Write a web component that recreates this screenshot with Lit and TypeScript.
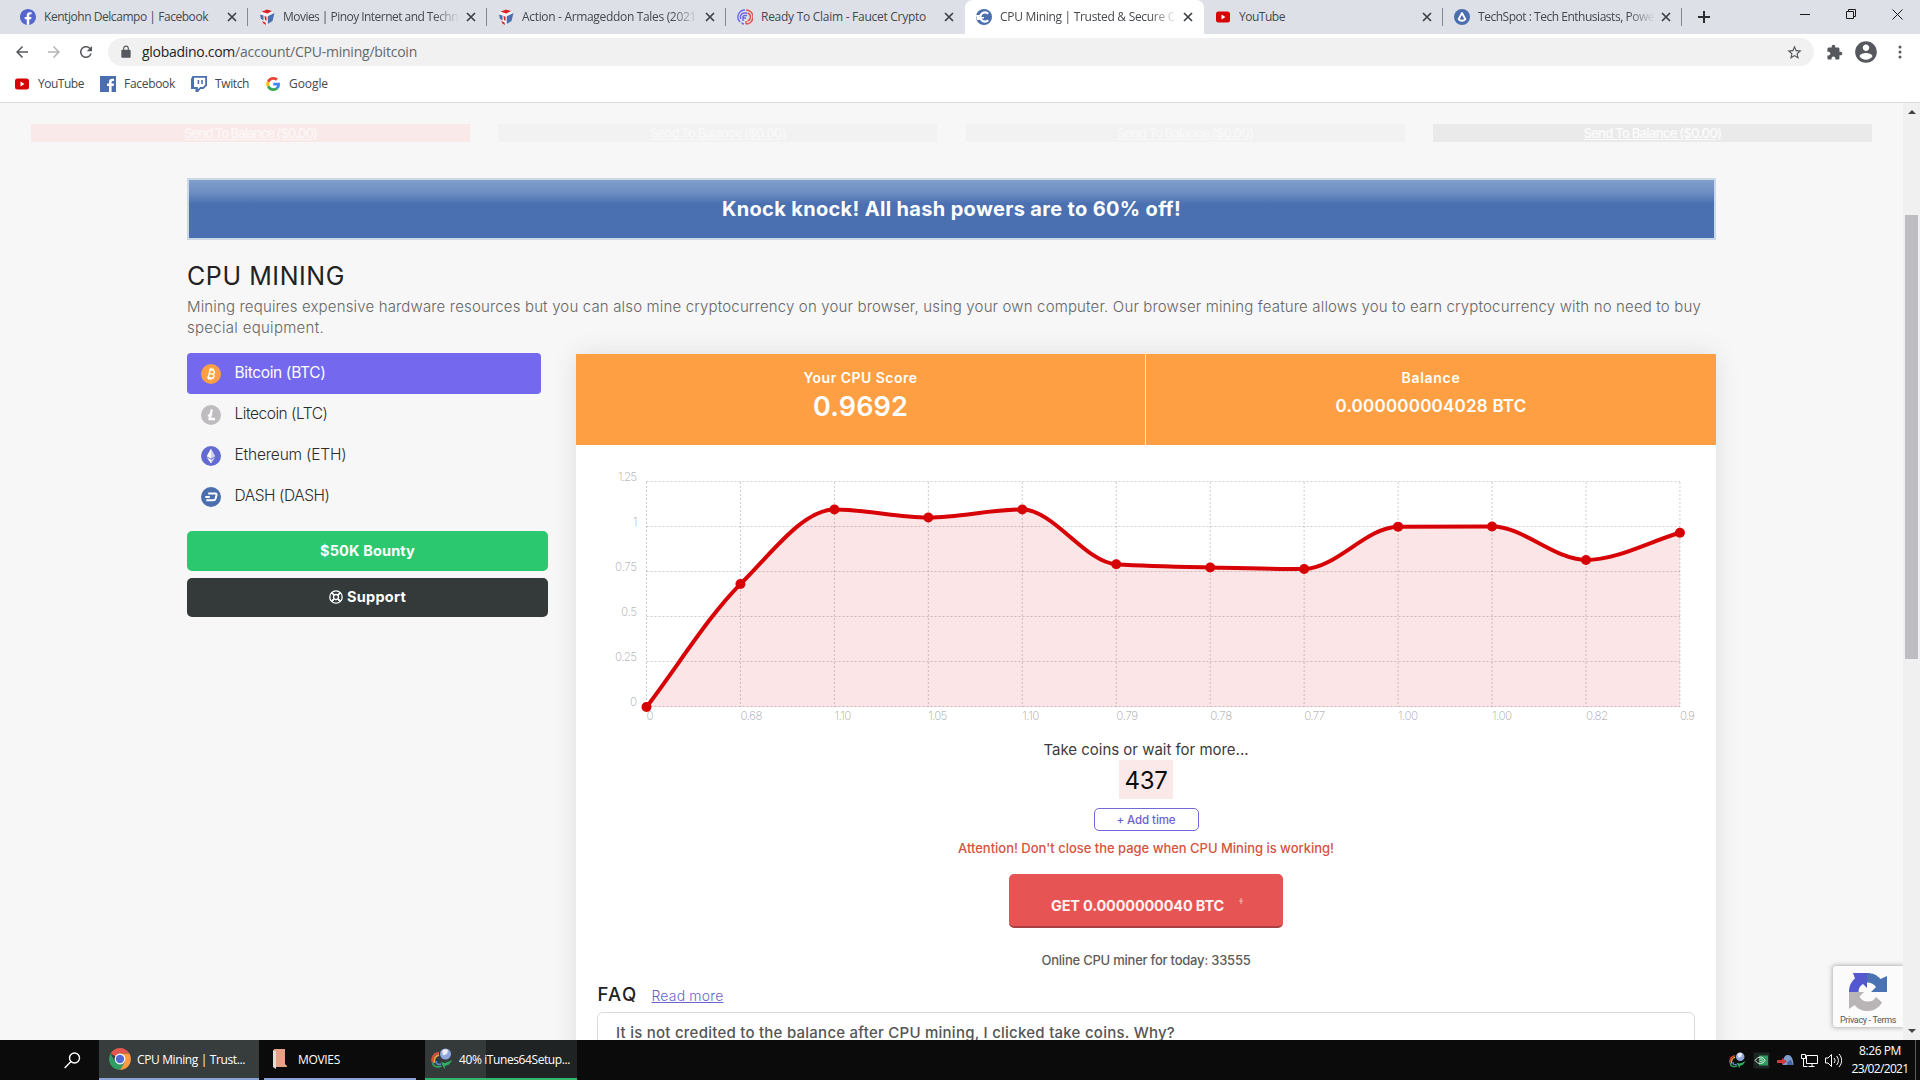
import { html, svg, css, LitElement } from "lit";
import { customElement, property, query } from "lit/decorators.js";
import { classMap } from "lit/directives/class-map.js";

// One line of text, tracked so that it fills the given width.
@customElement("fit-text")
export class FitText extends LitElement {
    static styles = css`
    :host {
        display: block;
        white-space: nowrap;
    }
    `;

    @property({ type: Number }) w = 0;
    @query("span") line!: HTMLSpanElement;

    firstUpdated() {
        const chars = (this.textContent || "").trim().length;
        const natural = this.line.getBoundingClientRect().width;
        if (this.w && chars) {
            this.line.style.letterSpacing = `${(this.w - natural) / chars}px`;
        }
    }

    render() {
        return html`<span><slot></slot></span>`;
    }
}

const fit = (text: string, w: number, cls = "") =>
    html`<fit-text class=${cls} w=${w}>${text}</fit-text>`;

const material = (d: string, size: number) =>
    html`<svg width=${size} height=${size} viewBox="0 0 24 24"><path fill="currentColor" d=${d} /></svg>`;

const paths = {
    back: "M20 11H7.83l5.59-5.59L12 4l-8 8 8 8 1.41-1.41L7.83 13H20v-2z",
    forward: "M12 4l-1.41 1.41L16.17 11H4v2h12.17l-5.58 5.59L12 20l8-8z",
    reload: "M17.65 6.35C16.2 4.9 14.21 4 12 4c-4.42 0-7.99 3.58-7.99 8s3.57 8 7.99 8c3.73 0 6.84-2.55 7.73-6h-2.08c-.82 2.33-3.04 4-5.65 4-3.31 0-6-2.69-6-6s2.69-6 6-6c1.66 0 3.14.69 4.22 1.78L13 11h7V4l-2.35 2.35z",
    lock: "M18 8h-1V6c0-2.76-2.24-5-5-5S7 3.24 7 6v2H6c-1.1 0-2 .9-2 2v10c0 1.1.9 2 2 2h12c1.1 0 2-.9 2-2V10c0-1.1-.9-2-2-2zM8.9 8V6c0-1.71 1.39-3.1 3.1-3.1 1.71 0 3.1 1.39 3.1 3.1v2z",
    star: "M22 9.24l-7.19-.62L12 2 9.19 8.63 2 9.24l5.46 4.73L5.82 21 12 17.27 18.18 21l-1.63-7.03L22 9.24zM12 15.4l-3.76 2.27 1-4.28-3.32-2.88 4.38-.38L12 6.1l1.71 4.04 4.38.38-3.32 2.88 1 4.28L12 15.4z",
    puzzle: "M20.5 11H19V7c0-1.1-.9-2-2-2h-4V3.5C13 2.12 11.88 1 10.5 1S8 2.12 8 3.5V5H4c-1.1 0-1.99.9-1.99 2v3.8H3.5c1.49 0 2.7 1.21 2.7 2.7s-1.21 2.7-2.7 2.7H2V20c0 1.1.9 2 2 2h3.8v-1.5c0-1.49 1.21-2.7 2.7-2.7 1.49 0 2.7 1.21 2.7 2.7V22H17c1.1 0 2-.9 2-2v-4h1.5c1.38 0 2.5-1.12 2.5-2.5S21.88 11 20.5 11z",
    person: "M12 2C6.48 2 2 6.48 2 12s4.48 10 10 10 10-4.48 10-10S17.52 2 12 2zm0 3c1.66 0 3 1.34 3 3s-1.34 3-3 3-3-1.34-3-3 1.34-3 3-3zm0 14.2c-2.5 0-4.71-1.28-6-3.22.03-1.99 4-3.08 6-3.08 1.99 0 5.97 1.09 6 3.08-1.29 1.94-3.5 3.22-6 3.22z",
    facebook: "M24 12.07c0-6.63-5.37-12-12-12s-12 5.37-12 12c0 5.99 4.39 10.95 10.13 11.85v-8.38H7.08v-3.47h3.05V9.43c0-3.01 1.79-4.67 4.53-4.67 1.31 0 2.69.24 2.69.24v2.95h-1.52c-1.49 0-1.96.93-1.96 1.87v2.25h3.33l-.53 3.47h-2.8v8.38C19.61 23.03 24 18.06 24 12.07z",
};

const favicons: Record<string, unknown> = {
    facebook: html`<svg width="16" height="16" viewBox="0 0 24 24"><circle cx="12" cy="12" r="11" fill="#fff" /><path fill="#5566cc" d=${paths.facebook} /></svg>`,
    cube: html`<svg width="16" height="16" viewBox="0 0 16 16">
        <path fill="#f3f1f4" d="M1 4l7-4 7 4-1.500 8L8 16l-5.500-4z" />
        <path fill="#4a6eae" d="M8.800 7.200L15.500 4 13.500 12 8.800 15z" />
        <path fill="#4a6eae" d="M1 5.500l3.500 1v5L2 10z" />
        <path fill="#d8222a" d="M2.500 2.800L8 .5l5 1.500-4.500 2.500zM3 12l3.500 1.500L7 16l-2.500-1.500zM5.500 7l2 .8v4l-1.500-.8z" />
    </svg>`,
    faucet: html`<svg width="16" height="16" viewBox="0 0 16 16" fill="none" stroke-width="1.4">
        <path stroke="#6a66e8" d="M8 1a7 7 0 0 0-5 12M10 4H7a4 4 0 0 0-3 6M10 6.500H8a2 2 0 0 0-2 2V12M5 13.500c0 1 1 1.500 2 1.500M6 9h3" />
        <path stroke="#e0524e" d="M9 1a7 7 0 0 1 0 14M10.500 4a4.200 4.200 0 0 1 0 8M9 12v3" />
    </svg>`,
    globadino: html`<svg width="16" height="16" viewBox="0 0 16 16">
        <circle cx="8" cy="8" r="8" fill="#4a6eae" />
        <path fill="none" stroke="#fff" stroke-width="2.200" d="M12.200 4.800A4.600 4.600 0 1 0 12.200 11.200" />
        <path fill="#fff" d="M0 6h5v1H3v1h5v1.500H4V11H1z" />
    </svg>`,
    youtube: html`<svg width="16" height="16" viewBox="0 0 16 16"><rect x="1" y="2.500" width="14" height="11" rx="2.500" fill="#d70206" /><path fill="#fff" d="M6.500 5.500v5L10.500 8z" /></svg>`,
    techspot: html`<svg width="16" height="16" viewBox="0 0 16 16">
        <circle cx="8" cy="8" r="8" fill="#4a6eae" />
        <path fill="none" stroke="#fff" stroke-width="1.800" stroke-linejoin="round" d="M8 4l3.400 6.200a4.500 4.500 0 0 1-6.800 0z" />
    </svg>`,
    fbSquare: html`<svg width="16" height="16" viewBox="0 0 16 16">
        <rect width="16" height="16" fill="#4a6eae" />
        <path fill="#fff" d="M9 16v-6H7V7.600h2V6c0-2 1.200-3.200 3.200-3.200H14V5h-1.200c-.9 0-1.200.4-1.200 1.200v1.400H14l-.4 2.400h-2v6z" />
    </svg>`,
    twitch: html`<svg width="16" height="16" viewBox="0 0 16 16">
        <path fill="#4a6eae" d="M1.500 0H16v9.500L12.500 13H9.500L7 16H4.500v-3H0V3z" />
        <path fill="#fff" d="M3 1.800h11.200V8.700L12 11H9.200l-2.400 2.200V11H3z" />
        <path fill="#4a6eae" d="M6.600 4h1.600v4H6.600zM10.200 4h1.600v4h-1.600z" />
    </svg>`,
    google: html`<svg width="16" height="16" viewBox="-4.500 -3.500 55 55">
        <path fill="#EA4335" d="M24 9.500c3.540 0 6.710 1.220 9.210 3.600l6.850-6.850C35.900 2.380 30.470 0 24 0 14.620 0 6.510 5.380 2.560 13.220l7.980 6.190C12.430 13.720 17.740 9.500 24 9.500z" />
        <path fill="#4285F4" d="M46.980 24.550c0-1.570-.15-3.090-.38-4.550H24v9.020h12.940c-.58 2.960-2.260 5.480-4.780 7.180l7.730 6c4.510-4.180 7.090-10.360 7.090-17.650z" />
        <path fill="#FBBC05" d="M10.530 28.590c-.48-1.450-.76-2.990-.76-4.590s.27-3.140.76-4.590l-7.980-6.190C.92 16.460 0 20.120 0 24c0 3.880.92 7.540 2.560 10.780l7.970-6.190z" />
        <path fill="#34A853" d="M24 48c6.480 0 11.930-2.130 15.890-5.810l-7.730-6c-2.150 1.450-4.920 2.300-8.160 2.300-6.260 0-11.570-4.220-13.470-9.910l-7.980 6.190C6.510 42.620 14.620 48 24 48z" />
    </svg>`,
};

const coinIcons: Record<string, unknown> = {
    btc: html`<svg width="20" height="20" viewBox="0 0 20 20">
        <circle cx="10" cy="10" r="10" fill="#ff9f43" />
        <g transform="rotate(13 10 10)" fill="none" stroke="#fff" stroke-width="1.400">
            <path d="M7 6h4a1.900 1.900 0 0 1 0 3.800H8h3.400a2.100 2.100 0 0 1 0 4.200H7M8.200 6v8M8.800 4v2M11 4v2M8.800 14v2M11 14v2" />
        </g>
    </svg>`,
    ltc: html`<svg width="20" height="20" viewBox="0 0 20 20">
        <circle cx="10" cy="10" r="10" fill="#bfbcc0" />
        <path fill="none" stroke="#fff" stroke-width="2.400" d="M10.800 4.500L8.600 14H14M7 11l4-1.700" />
    </svg>`,
    eth: html`<svg width="20" height="20" viewBox="0 0 20 20">
        <circle cx="10" cy="10" r="10" fill="#636bd2" />
        <path fill="#fff" d="M10 2.500l4.300 7.700L10 12.700z" opacity=".7" />
        <path fill="#fff" d="M10 2.500L5.700 10.200 10 12.700zM5.700 11.300L10 17.500v-3.700z" />
        <path fill="#fff" d="M14.300 11.300L10 17.500v-3.700z" opacity=".7" />
    </svg>`,
    dash: html`<svg width="20" height="20" viewBox="0 0 20 20">
        <circle cx="10" cy="10" r="10" fill="#4a6eae" />
        <path fill="none" stroke="#fff" stroke-width="2" stroke-linejoin="round" d="M7.200 6.500h7.300c1 0 1.300.6 1 1.500l-1 3.800c-.3.900-1 1.500-2 1.500H5.300M4.300 10h4.500" />
    </svg>`,
};

const chrome = html`<svg width="22" height="22" viewBox="0 0 22 22">
    <path fill="#e25650" d="M11 11L1.500 5.500A11 11 0 0 1 20.500 5.500L11 5.500z" />
    <path fill="#2f9e63" d="M11 11L6.200 13.700 1.500 5.500A11 11 0 0 0 11 22l4.800-8.200z" />
    <path fill="#fd9a42" d="M11 5.500h9.500A11 11 0 0 1 11 22l4.800-8.200z" />
    <circle cx="11" cy="11" r="5.400" fill="#fff" />
    <circle cx="11" cy="11" r="4.200" fill="#5468d4" />
</svg>`;

const idm = (size: number) => html`<svg width=${size} height=${size} viewBox="0 0 22 22">
    <circle cx="14.500" cy="6" r="5.500" fill="#8fa6dc" />
    <path fill="#eceaf2" d="M11 3c1.500-2 4-2.500 6-1l-1 4-4 1.500z" />
    <g fill="none" stroke-width="1.800">
        <path stroke="#d9503f" d="M8 5C3 5 .8 9 1.200 14" />
        <path stroke="#e9a23c" d="M8 7C4.500 7.500 2.800 10.500 3.200 15" />
        <path stroke="#35a562" d="M1.500 14.500c.5 4 5 5.500 9 3.500" />
        <path stroke="#5b86d8" d="M5 13c0 3 2 4 5 3" />
    </g>
    <path fill="#2fae62" d="M10 14l4 1 7.500-3-3.500 4.500-4 1.500-.5 3-2-3.500z" />
</svg>`;

interface Tab { icon: string; title: string; w: number; active?: boolean; faded?: boolean }

const tabs: Tab[] = [
    { icon: "facebook", title: "Kentjohn Delcampo | Facebook", w: 164 },
    { icon: "cube", title: "Movies | Pinoy Internet and Techn", w: 175, faded: true },
    { icon: "cube", title: "Action - Armageddon Tales (2021", w: 174, faded: true },
    { icon: "faucet", title: "Ready To Claim - Faucet Crypto", w: 165 },
    { icon: "globadino", title: "CPU Mining | Trusted & Secure C", w: 175, active: true, faded: true },
    { icon: "youtube", title: "YouTube", w: 46 },
    { icon: "techspot", title: "TechSpot : Tech Enthusiasts, Powe", w: 176, faded: true },
];

const coins = [
    { id: "btc", name: "Bitcoin (BTC)", w: 91 },
    { id: "ltc", name: "Litecoin (LTC)", w: 93 },
    { id: "eth", name: "Ethereum (ETH)", w: 112 },
    { id: "dash", name: "DASH (DASH)", w: 95 },
];

@customElement("score-chart")
export class ScoreChart extends LitElement {
    static styles = css`
    :host {
        display: block;
        height: 284px;
    }

    svg {
        display: block;
    }

    .grid {
        stroke: rgba(0, 0, 0, 0.2);
        stroke-width: 1;
        stroke-dasharray: 2px;
    }

    .line {
        fill: none;
        stroke: #d70206;
        stroke-width: 4;
    }

    .area {
        fill: #d70206;
        fill-opacity: 0.1;
    }

    .point {
        fill: #d70206;
    }

    text {
        fill: rgba(0, 0, 0, 0.3);
        font: 300 11.5px Inter, sans-serif;
    }
    `;

    values = [0, 0.683, 1.097, 1.053, 1.097, 0.793, 0.775, 0.767, 1.002, 1.003, 0.817, 0.968];
    labels: [string, number][] = [
        ["0", 7], ["0.68", 22], ["1.10", 17], ["1.05", 19], ["1.10", 17], ["0.79", 22],
        ["0.78", 22], ["0.77", 21], ["1.00", 20], ["1.00", 20], ["0.82", 22], ["0.9", 15],
    ];
    ticks: [string, number][] = [["0", 7], ["0.25", 22], ["0.5", 16], ["0.75", 22], ["1", 4], ["1.25", 19]];

    left = 70.5;
    bottom = 262;
    step = 93.95;

    // Monotone cubic interpolation through all points
    curve() {
        const xs = this.values.map((_, i) => this.left + i * this.step);
        const ys = this.values.map((v) => this.bottom - v * 180);
        const n = xs.length;
        const ds: number[] = [];
        for (let i = 0; i < n - 1; i++) {
            ds.push((ys[i + 1] - ys[i]) / this.step);
        }
        const ms = [ds[0]];
        for (let i = 1; i < n - 1; i++) {
            ms.push(ds[i] * ds[i - 1] <= 0 ? 0 : 2 / (1 / ds[i - 1] + 1 / ds[i]));
        }
        ms.push(ds[n - 2]);
        let d = `M${xs[0]},${ys[0]}`;
        for (let i = 0; i < n - 1; i++) {
            const k = this.step / 3;
            d += `C${xs[i] + k},${ys[i] + ms[i] * k},${xs[i + 1] - k},${ys[i + 1] - ms[i + 1] * k},${xs[i + 1]},${ys[i + 1]}`;
        }
        return d;
    }

    render() {
        const { left, bottom, step } = this;
        const right = left + step * 11;
        const d = this.curve();
        return html`
            <svg width="1140" height="284">
                ${this.values.map((_, i) => svg`<line class="grid" x1=${left + i * step} x2=${left + i * step} y1=${bottom - 225} y2=${bottom} />`)}
                ${this.ticks.map((_, i) => svg`<line class="grid" x1=${left} x2=${right} y1=${bottom - i * 45 - 0.5} y2=${bottom - i * 45 - 0.5} />`)}
                <path class="area" d="${d}V${bottom}H${left}Z" />
                <path class="line" d=${d} />
                ${this.values.map((v, i) => svg`<circle class="point" cx=${left + i * step} cy=${bottom - v * 180} r="5" />`)}
                ${this.ticks.map(([t, w], i) => svg`<text x=${61 - w} y=${bottom - i * 45 - 1.5} textLength=${w}>${t}</text>`)}
                ${this.labels.map(([t, w], i) => svg`<text x=${left + i * step} y=${bottom + 13} textLength=${w}>${t}</text>`)}
            </svg>
        `;
    }
}

@customElement("browser-bar")
export class BrowserBar extends LitElement {
    static styles = css`
    :host {
        display: block;
        height: 103px;
        box-sizing: border-box;
        border-bottom: 1px solid #dcdcde;
        background: #fff;
        font: 12px/16px "Open Sans", sans-serif;
        color: #45484c;
    }

    svg {
        display: block;
        flex: none;
    }

    .tabs {
        display: flex;
        height: 34px;
        padding-left: 9px;
        background: #dde1e7;
    }

    .tab {
        display: flex;
        align-items: center;
        box-sizing: border-box;
        width: 239px;
        padding: 0 11px;
        position: relative;
    }

    .tab::after {
        content: "";
        position: absolute;
        right: 0;
        top: 8px;
        height: 18px;
        width: 1px;
        background: #85888d;
    }

    .tab.active {
        background: #fff;
        border-radius: 8px 8px 0 0;
    }

    .tab.active::after,
    .tab.before::after {
        display: none;
    }

    .title {
        flex: 1;
        overflow: hidden;
        margin: 0 4px 0 8px;
    }

    .faded .title {
        -webkit-mask-image: linear-gradient(90deg, #000 150px, transparent 177px);
    }

    .plus {
        width: 43px;
        display: grid;
        place-items: center;
    }

    .window {
        display: flex;
        margin-left: auto;
        height: 28px;
        color: #1b1b1b;
    }

    .window div {
        width: 46px;
        display: grid;
        place-items: center;
    }

    .toolbar {
        display: flex;
        align-items: center;
        height: 36px;
        padding: 0 9px 0 13px;
        color: #55585c;
    }

    .nav {
        display: flex;
        gap: 14px;
    }

    .muted {
        color: #b4b5b7;
    }

    .address {
        flex: 1;
        display: flex;
        align-items: center;
        height: 28px;
        box-sizing: border-box;
        margin: 0 12px 0 13px;
        padding: 0 11px;
        border-radius: 14px;
        background: #f1f1f1;
        font-size: 14px;
    }

    .lock {
        margin-right: 9px;
    }

    .host {
        color: #222326;
    }

    .path {
        flex: 1;
        color: #66686c;
    }

    .actions {
        display: flex;
        align-items: center;
        gap: 10px;
    }

    .bookmarks {
        display: flex;
        align-items: center;
        height: 28px;
        padding-left: 14px;
    }

    .bookmark {
        display: flex;
        align-items: center;
        gap: 8px;
        margin-right: 16px;
    }
    `;

    render() {
        const cross = html`<svg width="10" height="10" viewBox="0 0 10 10"><path d="M1 1l8 8M9 1L1 9" stroke="#3c4043" stroke-width="1.700" /></svg>`;
        return html`
            <div class="tabs">
                ${tabs.map((t, i) => html`
                    <div class="tab ${classMap({ active: !!t.active, faded: !!t.faded, before: !!tabs[i + 1]?.active })}">
                        ${favicons[t.icon]}
                        <div class="title">${fit(t.title, t.w)}</div>
                        ${cross}
                    </div>
                `)}
                <div class="plus"><svg width="12" height="12" viewBox="0 0 12 12"><path d="M6 0v12M0 6h12" stroke="#2c2e31" stroke-width="2" /></svg></div>
                <div class="window">
                    <div><svg width="10" height="10"><path d="M0 5.500h10" stroke="currentColor" /></svg></div>
                    <div><svg width="10" height="10" fill="none" stroke="currentColor"><path d="M.5 2.500h7v7h-7zM2.500 2.500v-2h7v7h-2" /></svg></div>
                    <div><svg width="11" height="11"><path d="M.5.5l10 10M10.500.5l-10 10" stroke="currentColor" /></svg></div>
                </div>
            </div>
            <div class="toolbar">
                <div class="nav">
                    ${material(paths.back, 18)}
                    <span class="muted">${material(paths.forward, 18)}</span>
                    ${material(paths.reload, 18)}
                </div>
                <div class="address">
                    <span class="lock">${material(paths.lock, 14)}</span>
                    ${fit("globadino.com", 93, "host")}
                    ${fit("/account/CPU-mining/bitcoin", 182, "path")}
                    ${material(paths.star, 17)}
                </div>
                <div class="actions">
                    ${material(paths.puzzle, 17)}
                    ${material(paths.person, 26)}
                    <svg width="22" height="16"><circle cx="11" cy="3" r="1.500" fill="#55585c" /><circle cx="11" cy="8" r="1.500" fill="#55585c" /><circle cx="11" cy="13" r="1.500" fill="#55585c" /></svg>
                </div>
            </div>
            <div class="bookmarks">
                <div class="bookmark">${favicons.youtube}${fit("YouTube", 46)}</div>
                <div class="bookmark">${favicons.fbSquare}${fit("Facebook", 51)}</div>
                <div class="bookmark">${favicons.twitch}${fit("Twitch", 34)}</div>
                <div class="bookmark">${favicons.google}${fit("Google", 39)}</div>
            </div>
        `;
    }
}

@customElement("mining-page")
export class MiningPage extends LitElement {
    static styles = css`
    :host {
        display: block;
        overflow: hidden;
        position: relative;
        background: #f7f7f7;
        font: 15px/20px Inter, sans-serif;
        color: #333;
    }

    svg {
        display: block;
    }

    .ghosts {
        display: grid;
        grid-template-columns: repeat(4, 439px);
        column-gap: 28.300px;
        padding: 21px 0 0 31px;
        height: 54px;
        box-sizing: border-box;
    }

    .ghost {
        display: grid;
        place-items: center;
        height: 18px;
        background: #f2f2f2;
        color: #f8f8f8;
        font: 600 13px/18px Inter, sans-serif;
        text-decoration: underline;
    }

    .ghost.red {
        background: #fae9e9;
        color: #fcf6f6;
    }

    .ghost.dark {
        background: #eaeaea;
        color: #fafafa;
    }

    .wrap {
        width: 1529px;
        margin: 21px 0 0 187px;
    }

    .banner {
        display: grid;
        place-items: center;
        height: 62px;
        box-sizing: border-box;
        border: 2px solid #cdd8e6;
        background: linear-gradient(#809fcb 0, #6f8fc3 12px, #4a70b1 24px);
        color: #fff;
        font-size: 20px;
        font-weight: 700;
    }

    .heading {
        margin-top: 20px;
        font-size: 25px;
        line-height: 32px;
        color: #222;
    }

    .lead {
        margin-top: 4px;
        font-weight: 300;
        font-size: 15px;
        line-height: 21px;
        color: #666;
    }

    .columns {
        display: flex;
        align-items: flex-start;
        margin-top: 15px;
    }

    .side {
        width: 361px;
        margin-right: 28px;
    }

    .coin {
        display: flex;
        align-items: center;
        gap: 13.500px;
        height: 41px;
        width: 354px;
        box-sizing: border-box;
        padding-left: 14px;
        border-radius: 4px;
        color: #2c2c2c;
        font-size: 15.500px;
        font-weight: 300;
    }

    .coin svg {
        margin-top: 1px;
    }

    .coin fit-text {
        margin-top: -1px;
    }

    .coin.active {
        background: #7368ee;
        color: #fff;
        font-weight: 400;
    }

    .btn {
        display: flex;
        align-items: center;
        justify-content: center;
        gap: 4px;
        height: 40px;
        border-radius: 5px;
        color: #fff;
        font-weight: 700;
        font-size: 14.500px;
    }

    .green {
        margin-top: 14px;
        background: #2bc870;
    }

    .black {
        margin-top: 7px;
        height: 39px;
        box-sizing: border-box;
        padding-bottom: 2px;
        background: #343a3a;
    }

    .card {
        width: 1140px;
        height: 740px;
        margin-top: 1px;
        background: #fff;
        box-shadow: 0 0 24px rgba(0, 0, 0, 0.1);
    }

    .stats {
        display: grid;
        grid-template-columns: 569px 571px;
        height: 91px;
        background: #ff9f43;
        color: #fff;
        font-weight: 600;
    }

    .stat {
        display: flex;
        flex-direction: column;
        align-items: center;
        padding-top: 14px;
        font-size: 14px;
    }

    .stat + .stat {
        border-left: 1px solid #ffe3c6;
    }

    .score,
    .balance {
        line-height: 37px;
    }

    .score {
        font-size: 27px;
    }

    .balance {
        font-size: 17px;
    }

    .claim {
        display: flex;
        flex-direction: column;
        align-items: center;
    }

    .wait {
        margin-top: 11px;
        color: #3c3c3c;
    }

    .timer {
        display: grid;
        place-items: center;
        width: 54px;
        height: 39px;
        background: #fbe9ea;
        color: #0c0c0c;
        font-size: 24px;
        line-height: 41px;
    }

    .add {
        display: grid;
        place-items: center;
        width: 105px;
        height: 23px;
        box-sizing: border-box;
        margin-top: 9px;
        border: 1px solid #7368d8;
        border-radius: 5px;
        color: #6a62cf;
        font-weight: 500;
        font-size: 11.500px;
        line-height: 18px;
    }

    .warn {
        margin-top: 7px;
        color: #d5533f;
        font-weight: 500;
        font-size: 13px;
    }

    .get {
        position: relative;
        display: grid;
        place-items: center;
        width: 274px;
        height: 54px;
        box-sizing: border-box;
        margin-top: 16px;
        padding: 12px 17px 0 0;
        border-radius: 5px;
        border-bottom: 2px solid #a84142;
        background: #e75454;
        color: #fff2f0;
        font-weight: 700;
        font-size: 14.500px;
    }

    .spark {
        position: absolute;
        left: 229px;
        top: 24px;
    }

    .online {
        margin-top: 22px;
        color: #5c5c5c;
        font-weight: 500;
        font-size: 13px;
    }

    .faq {
        display: flex;
        align-items: baseline;
        gap: 14px;
        margin: 11.500px 0 0 21.500px;
        font-size: 18.500px;
        font-weight: 500;
        line-height: 24px;
        color: #222;
    }

    .more {
        color: #6a62cf;
        font-size: 14px;
        font-weight: 300;
        text-decoration: underline;
    }

    .question {
        width: 1098px;
        height: 60px;
        box-sizing: border-box;
        margin: 4.500px 0 0 21px;
        padding: 10px 18px;
        border: 1px solid #d8dadb;
        border-radius: 6px;
        color: #555;
        font-weight: 500;
    }

    .captcha {
        position: absolute;
        right: 0;
        bottom: 13px;
        width: 70px;
        height: 61px;
        box-sizing: border-box;
        padding: 7px 0 0 7px;
        border-radius: 3px 0 0 3px;
        background: #fbfbfb;
        box-shadow: 0 0 4px 1px rgba(120, 110, 110, 0.5);
        color: #555;
        font: 9px/14px Roboto, sans-serif;
    }

    .captcha svg {
        margin: 0 0 2px 9px;
    }
    `;

    render() {
        const ghost = "Send To Balance ($0.00)";
        return html`
            <div class="ghosts">
                <div class="ghost red">${fit(ghost, 133)}</div>
                <div class="ghost">${fit(ghost, 136)}</div>
                <div class="ghost">${fit(ghost, 136)}</div>
                <div class="ghost dark">${fit(ghost, 138)}</div>
            </div>
            <div class="wrap">
                <div class="banner">${fit("Knock knock! All hash powers are to 60% off!", 459)}</div>
                ${fit("CPU MINING", 158, "heading")}
                <div class="lead">
                    ${fit("Mining requires expensive hardware resources but you can also mine cryptocurrency on your browser, using your own computer. Our browser mining feature allows you to earn cryptocurrency with no need to buy", 1514)}
                    ${fit("special equipment.", 137)}
                </div>
                <div class="columns">
                    <div class="side">
                        ${coins.map((c, i) => html`
                            <div class="coin ${classMap({ active: i === 0 })}">${coinIcons[c.id]}${fit(c.name, c.w)}</div>
                        `)}
                        <div class="btn green">${fit("$50K Bounty", 95)}</div>
                        <div class="btn black">
                            <svg width="14" height="14" viewBox="0 0 14 14" fill="none" stroke="#fff" stroke-width="1.300">
                                <circle cx="7" cy="7" r="6.200" /><circle cx="7" cy="7" r="2.500" />
                                <path d="M2.600 2.600l2.600 2.600M11.400 2.600L8.800 5.200M2.600 11.400l2.600-2.600M11.400 11.400L8.800 8.800" stroke-width="1.800" />
                            </svg>
                            ${fit("Support", 59)}
                        </div>
                    </div>
                    <div class="card">
                        <div class="stats">
                            <div class="stat">${fit("Your CPU Score", 114)}${fit("0.9692", 95, "score")}</div>
                            <div class="stat">${fit("Balance", 59)}${fit("0.000000004028 BTC", 191, "balance")}</div>
                        </div>
                        <score-chart></score-chart>
                        <div class="claim">
                            ${fit("Take coins or wait for more...", 205, "wait")}
                            <div class="timer">${fit("437", 43)}</div>
                            <div class="add">${fit("+ Add time", 59)}</div>
                            ${fit("Attention! Don't close the page when CPU Mining is working!", 376, "warn")}
                            <div class="get">
                                ${fit("GET 0.0000000040 BTC", 173)}
                                <svg class="spark" width="6" height="6"><path d="M3 0v6M1 3h4" stroke="#f8b9b4" /></svg>
                            </div>
                            ${fit("Online CPU miner for today: 33555", 209, "online")}
                        </div>
                        <div class="faq">${fit("FAQ", 40)}${fit("Read more", 72, "more")}</div>
                        <div class="question">${fit("It is not credited to the balance after CPU mining, I clicked take coins. Why?", 559)}</div>
                    </div>
                </div>
            </div>
            <div class="captcha">
                <svg width="38" height="38" viewBox="0 0 38 38">
                    <path fill="#4a72b2" d="M18 0c6 0 10 2 13.500 6L38 3v16H22l5-5c-2-3-5-4.500-9-4.500z" />
                    <path fill="#5358cf" d="M0 19C0 13 2 9 6 5.500L4 0h14v15l-4-4c-3 2-4.500 4-4.500 8z" />
                    <path fill="#b9b4b6" d="M0 19h15l-4.500 4.500c2 4 5 5 8.500 5 4 0 6-1.500 8-4.500l6 5.500C29.500 35 25 38 19 38c-6 0-10-2-13.500-6L0 36z" />
                </svg>
                ${fit("Privacy - Terms", 56)}
            </div>
        `;
    }
}

@customElement("task-bar")
export class TaskBar extends LitElement {
    static styles = css`
    :host {
        display: flex;
        height: 40px;
        background: #0b0b0b;
        color: #fff;
        font: 12px/18px "Open Sans", sans-serif;
    }

    svg {
        display: block;
        flex: none;
    }

    .search {
        width: 35px;
        padding: 12px 0 0 64px;
    }

    .task {
        display: flex;
        align-items: center;
        box-sizing: border-box;
        height: 40px;
        border-bottom: 2px solid #8aa3d6;
    }

    .task fit-text {
        margin-top: 2px;
    }

    .chrome {
        width: 160px;
        padding-left: 10px;
        gap: 6px;
        background: #373c3c;
    }

    .folder {
        width: 152px;
        margin: 0 9px 0 5px;
        padding-left: 9px;
        gap: 11px;
    }

    .download {
        width: 152px;
        padding-left: 6px;
        gap: 6px;
        border-color: #32b56c;
        background: linear-gradient(90deg, #343a3a 61px, #1f2323 61px);
    }

    .tray {
        display: flex;
        align-items: center;
        gap: 7px;
        margin-left: auto;
    }

    .clock {
        display: flex;
        flex-direction: column;
        align-items: center;
        width: 58px;
        margin: 0 -1px 0 2px;
    }

    .edge {
        width: 5px;
        height: 40px;
        border-left: 1px solid #5c5c5c;
        box-sizing: border-box;
    }
    `;

    render() {
        return html`
            <div class="search"><svg width="17" height="17" fill="none" stroke="#fff" stroke-width="1.400"><circle cx="10.500" cy="6" r="5" /><path d="M7 9.500L.7 16" /></svg></div>
            <div class="task chrome">${chrome}${fit("CPU Mining | Trust...", 108)}</div>
            <div class="task folder">
                <svg width="14" height="20" viewBox="0 0 14 20"><path fill="#e8a184" d="M1 0h11v15l2 2v1H3l-1 2z" /><path fill="#e6dcd6" d="M0 1l3 1.500V20l-3-2z" /></svg>
                ${fit("MOVIES", 42)}
            </div>
            <div class="task download">${idm(22)}${fit("40% iTunes64Setup...", 111)}</div>
            <div class="tray">
                ${idm(17)}
                <svg width="17" height="17" viewBox="0 0 17 17"><rect x=".5" y=".5" width="16" height="16" fill="#1c2622" /><path fill="#2f9a5f" d="M6 3.500h9v10H6z" /><path fill="none" stroke="#d8efe2" d="M2 8.500c3-4.500 8-4.500 10 0-2 4-7 4-10 0zM6 8.500c1-2 3-2 4 0-1 1.500-2 1.500-3 .5" /></svg>
                <svg width="17" height="17" viewBox="0 0 17 17"><path fill="#7d9dcb" d="M6 13c0-8 2-10 5-10s5 3 5.500 10z" /><path fill="#4466a8" d="M10 13c0-4 3-5 4-5l2 5z" /><path fill="#d23a3a" d="M0 8h5V6l5 3.500L5 13v-2H0z" /></svg>
                <svg width="17" height="15" viewBox="0 0 17 15" fill="none" stroke="#fff"><path d="M5.500 2.500h11v8h-11zM11 10.500v3M7.500 13.500h6M.5 1.500h4v4h-4zM2.500 5.500v8h4" /></svg>
                <svg width="17" height="15" viewBox="0 0 17 15" fill="none" stroke="#fff"><path d="M.5 5h2.500l3.500-3.500v12L3 10H.5zM9 5c1.300 1.500 1.300 3.500 0 5M11.500 3c2.500 2.500 2.500 6.500 0 9M14 1c3.500 4 3.500 9 0 13" /></svg>
                <div class="clock">${fit("8:26 PM", 42)}${fit("23/02/2021", 57)}</div>
                <div class="edge"></div>
            </div>
        `;
    }
}

@customElement("app-root")
export class AppRoot extends LitElement {
    static styles = css`
    :host {
        display: flex;
        flex-direction: column;
        width: 1920px;
        height: 1080px;
        overflow: hidden;
    }

    .view {
        flex: 1;
        min-height: 0;
        display: grid;
        grid-template-columns: 1903px 17px;
        grid-template-rows: 937px;
    }

    .scroll {
        display: flex;
        flex-direction: column;
        align-items: center;
        background: #f0f0f1;
    }

    .thumb {
        width: 13px;
        height: 444px;
        margin: 101px 0 auto;
        background: #bebdc1;
    }

    .up,
    .down {
        border: 4px solid transparent;
        flex: none;
    }

    .up {
        margin-top: 7px;
        border-top: 0;
        border-bottom-color: #444;
    }

    .down {
        margin-bottom: 7px;
        border-bottom: 0;
        border-top-color: #444;
    }
    `;

    render() {
        return html`
            <browser-bar></browser-bar>
            <div class="view">
                <mining-page></mining-page>
                <div class="scroll">
                    <div class="up"></div>
                    <div class="thumb"></div>
                    <div class="down"></div>
                </div>
            </div>
            <task-bar></task-bar>
        `;
    }
}
